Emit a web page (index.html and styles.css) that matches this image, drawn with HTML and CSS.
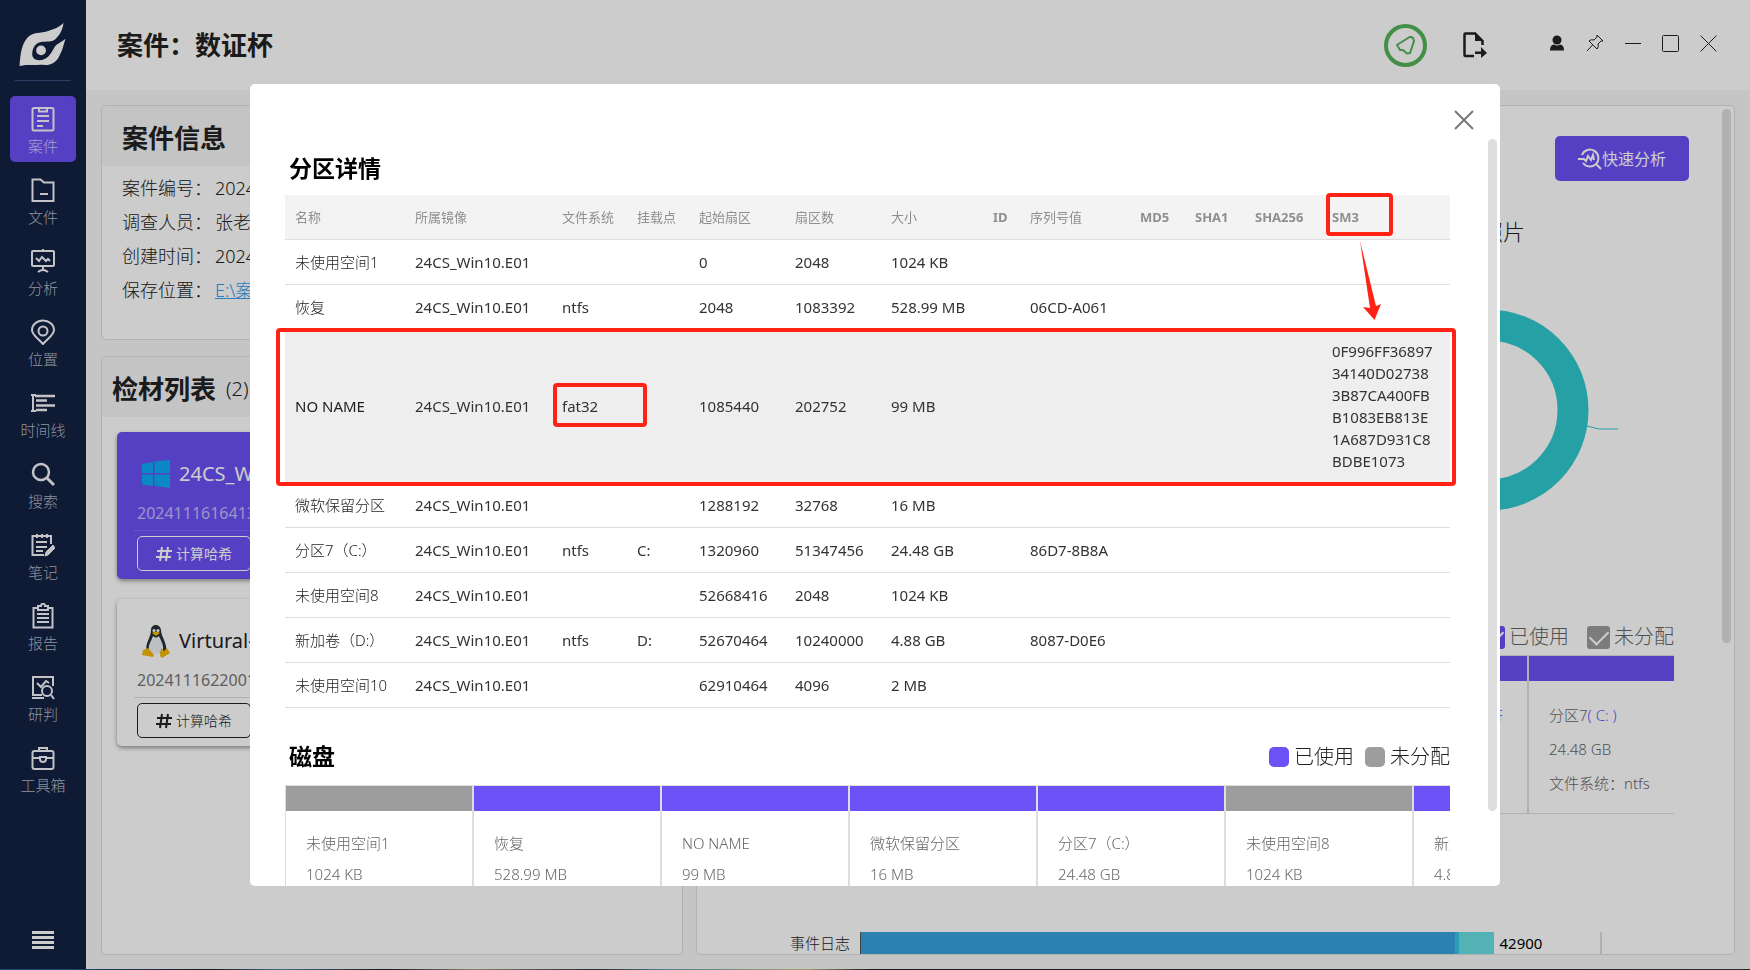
FILE: index.html
```html
<!DOCTYPE html>
<html lang="zh-CN">
<head>
<meta charset="utf-8">
<title>案件：数证杯</title>
<link rel="stylesheet" href="styles.css">
</head>
<body>
<div class="app">
  <nav class="sidebar" aria-label="主导航">
    <svg class="logo" viewBox="0 0 50 46" aria-hidden="true">
      <path fill="#fff" d="M1 44C2 31 3 22 9 15C15 9 22 11 31 8C37 6 42 4 46 0C45 7 42 13 37 17C32 20 26 18 21 20C16 22 14 27 14 32C14 36 17 38 21 38C30 38 33 31 36 26C39 20 44 20 48 16C46 22 45 28 42 33C39 40 34 43 27 43C22 42 19 43 15 43C10 43 5 43 1 44Z"/>
      <circle cx="23" cy="28" r="5" fill="#fff"/>
    </svg>
    <hr class="sidebar-rule">
    <ul class="menu">
      <li><button class="menu-item active"><svg viewBox="0 0 24 26"><rect x="1.5" y="2" width="21" height="22.5" rx="1.5"/><path d="M8 2v3.5h8V2M6 10h12M6 15h12M6 20h6"/></svg>案件</button></li>
      <li><button class="menu-item"><svg viewBox="0 0 24 26"><path d="M1.5 2.5h8l3.500 3h9.500V24H1.500zM9 17h8"/></svg>文件</button></li>
      <li><button class="menu-item"><svg viewBox="0 0 24 26"><rect x="1" y="3" width="22" height="15" rx="1"/><path d="M5 10l3 3 3-4 4 4 2-2 2 2M12 1v2M12 18v4M7 24q5-4 10 0"/></svg>分析</button></li>
      <li><button class="menu-item"><svg viewBox="0 0 24 26"><path d="M12 25C7 19 1 16 1 11a11 9.500 0 0 1 22 0C23 16 17 19 12 25z"/><circle cx="12" cy="12" r="4.500"/></svg>位置</button></li>
      <li><button class="menu-item"><svg viewBox="0 0 24 26"><path d="M2 4v18M0 5h5M0 21h5" /><path stroke-width="2.500" d="M4 6h20M5 10.500h11M5 15.500h19M5 20h11"/></svg>时间线</button></li>
      <li><button class="menu-item"><svg viewBox="0 0 24 26"><path stroke-width="3" d="M16 17l7 7"/><circle cx="10" cy="11" r="8" stroke-width="2.500"/></svg>搜索</button></li>
      <li><button class="menu-item"><svg viewBox="0 0 24 26"><path d="M13 23H1.500V4H20v8M6 2v4M11 2v4M16 2v4M5 10h11M5 15h11M5 19h7"/><path fill="currentColor" stroke-width="1" d="M14 24l1-4 7-7 2 3-7 7z"/></svg>笔记</button></li>
      <li><button class="menu-item"><svg viewBox="0 0 24 26"><path d="M7 5H2.500v19.500h19V5H17M7 3h3c0-3 4-3 4 0h3v4H7zM6 11h12M6 15h12M6 19h12"/></svg>报告</button></li>
      <li><button class="menu-item"><svg viewBox="0 0 24 26"><path d="M22 12V3H2v18h9M1 24h12M6 9l4 4 5-6 3 2"/><circle cx="16" cy="17" r="5"/><path d="M20 21l3 4"/></svg>研判</button></li>
      <li><button class="menu-item"><svg viewBox="0 0 24 26"><rect x="1.500" y="6" width="21" height="18" rx="2"/><path d="M8 6V3h8v3M1.500 13H9M15 13h7.500M9 12v2c0 4 6 4 6 0v-2z"/></svg>工具箱</button></li>
    </ul>
    <button class="menu-toggle" aria-label="展开菜单"><svg viewBox="0 0 22 19"><path d="M0 1.500h22M0 6.500h22M0 11.500h22M0 16.500h22"/></svg></button>
  </nav>

  <div class="workspace">
    <header class="topbar">
      <h1>案件：数证杯</h1>
      <div class="top-actions">
        <button class="status" aria-label="通知"><svg width="19" height="19" viewBox="0 0 19 19"><path d="M1 9L12 2Q15 0 17 2L18 5L14 17L11 17.500L7 14L4 14z"/></svg></button>
        <button class="export" aria-label="导出"><svg width="24" height="26" viewBox="0 0 24 26"><path d="M11 24H2.500Q1.500 24 1.500 23V2.500Q1.500 1.500 2.500 1.500H12L19.500 9v4" fill="none" stroke="currentColor" stroke-width="2.500"/><path fill="currentColor" d="M12 0v9h8.500zM12 19.500h6V15l6 6-6 5v-4h-6z"/></svg></button>
        <div class="window-actions">
          <button aria-label="用户"><svg width="16" height="16" viewBox="0 0 16 16"><circle cx="8" cy="5" r="4.500" fill="currentColor"/><path fill="currentColor" d="M1 15.500Q1 10 5 9.500Q8 11.500 11 9.500Q15 10 15 15.500z"/></svg></button>
          <button aria-label="置顶"><svg width="18" height="18" viewBox="0 0 18 18" class="thin"><path d="M11 1l6 6-2 0-3 3q1 3-1 5L3 7q2-2 5-1l3-3zM6.500 11L1 17"/></svg></button>
          <button aria-label="最小化"><svg width="16" height="16" viewBox="0 0 16 16" class="thin"><path d="M0 8.500h16"/></svg></button>
          <button aria-label="最大化"><svg width="17" height="17" viewBox="0 0 17 17" class="thin"><rect x=".5" y=".5" width="16" height="16" rx="1"/></svg></button>
          <button aria-label="关闭"><svg width="17" height="17" viewBox="0 0 17 17" class="thin"><path d="M.5.5l16 16M16.500.5l-16 16"/></svg></button>
        </div>
      </div>
    </header>

    <main class="content">
      <div class="left">
        <section class="panel case">
          <h2 class="panel-head">案件信息</h2>
          <dl class="facts">
            <dt>案件编号：</dt><dd>20241116</dd>
            <dt>调查人员：</dt><dd>张老师</dd>
            <dt>创建时间：</dt><dd>2024-11-16</dd>
            <dt>保存位置：</dt><dd><a href="#">E:\案件</a></dd>
          </dl>
        </section>
        <section class="panel evidence">
          <div class="panel-head tight"><h2>检材列表</h2><span class="count">(2)</span></div>
          <div class="cards">
            <article class="card selected">
              <div class="card-title"><svg class="os" viewBox="0 0 30 30"><path fill="#0caaf5" d="M1 5l11-2v11H1zM13.500 2.500L29 1v13H13.500zM1 15.500h11V27L1 25.500zM13.500 15.500H29V29l-15.500-2z"/></svg>24CS_Win10.E01</div>
              <p class="serial">20241116164133</p>
              <div class="card-foot"><button class="hash"><svg viewBox="0 0 16 16"><path d="M6 1L4 15M12 1l-2 14M1 5h15M0 11h15"/></svg>计算哈希</button></div>
            </article>
            <article class="card">
              <div class="card-title"><svg class="os" viewBox="0 0 30 34"><path fill="#273038" d="M10 6C10 0 19-1 20 6C20 13 27 19 25 29H6C3 20 10 14 10 6z"/><path fill="#eef1f4" d="M12 12Q15 15 18 12C20 17 23 21 22 26Q15 34 8 27C7 20 10 18 12 12z"/><circle cx="13" cy="6.500" r="1.500" fill="#fff"/><circle cx="17" cy="6.500" r="1.500" fill="#fff"/><path fill="#f5b800" d="M11 9q4-3 8 0l-4 3zM2 26l5-2 6 7-1 2-11-2zM20 24l3 3 3-3 3 5-8 5-2-2z"/></svg>Virtural-Disk</div>
              <p class="serial">20241116220015</p>
              <div class="card-foot"><button class="hash"><svg viewBox="0 0 16 16"><path d="M6 1L4 15M12 1l-2 14M1 5h15M0 11h15"/></svg>计算哈希</button></div>
            </article>
          </div>
        </section>
      </div>

      <section class="panel overview">
        <div class="overview-main">
          <div class="toolbar"><button class="quick"><svg width="24" height="22" viewBox="0 0 24 22"><path d="M4 7a8.500 8.500 0 1 1 1 8M18 16l5 5M0 11h6l2 2 2-5 3 4 2-5 1 5"/></svg>快速分析</button></div>
          <figure class="donut">
            <figcaption>照片</figcaption>
            <svg width="202" height="202" viewBox="0 0 202 202"><circle cx="101" cy="101" r="85" fill="none" stroke="#2fc8cd" stroke-width="31"/><path d="M200 117l12 3h19" fill="none" stroke="#2fc8cd"/></svg>
          </figure>
          <div class="filters">
            <label class="used"><input type="checkbox" checked>已使用</label>
            <label class="free"><input type="checkbox" checked>未分配</label>
          </div>
          <div class="mini-disk">
            <div class="part used"><p class="no-letter">无盘符</p></div>
            <div class="part used"><p>分区7<span>( C: )</span></p><p>24.48 GB</p><p>文件系统：ntfs</p></div>
          </div>
          <div class="chart">
            <span class="chart-label">事件日志</span>
            <div class="plot"><i class="bar-a"></i><i class="bar-b"></i><i class="bar-c"></i><span class="value">42900</span><i class="grid-line"></i></div>
          </div>
        </div>
        <div class="scroll"><i class="thumb short"></i></div>
      </section>
    </main>
  </div>
</div>

<div class="overlay">
  <div class="dialog" role="dialog" aria-modal="true" aria-labelledby="dialog-title">
    <div class="dialog-top"><button class="close" aria-label="关闭"><svg width="20" height="20" viewBox="0 0 20 20"><path d="M1 1l18 18M19 1L1 19"/></svg></button></div>
    <div class="dialog-body">
      <div class="dialog-content">
        <h2 id="dialog-title" class="section-title">分区详情</h2>
        <div class="table-wrap">
          <table>
            <colgroup><col class="w120"><col class="w147"><col class="w75"><col class="w62"><col class="w96"><col class="w96"><col class="w102"><col class="w37"><col class="w110"><col class="w55"><col class="w60"><col class="w77"><col class="w128"></colgroup>
            <thead><tr><th>名称</th><th>所属镜像</th><th>文件系统</th><th>挂载点</th><th>起始扇区</th><th>扇区数</th><th>大小</th><th class="latin">ID</th><th>序列号值</th><th class="latin">MD5</th><th class="latin">SHA1</th><th class="latin">SHA256</th><th class="latin">SM3</th></tr></thead>
            <tbody>
              <tr><td>未使用空间1</td><td>24CS_Win10.E01</td><td></td><td></td><td>0</td><td>2048</td><td>1024 KB</td><td></td><td></td><td></td><td></td><td></td><td></td></tr>
              <tr><td>恢复</td><td>24CS_Win10.E01</td><td>ntfs</td><td></td><td>2048</td><td>1083392</td><td>528.99 MB</td><td></td><td>06CD-A061</td><td></td><td></td><td></td><td></td></tr>
              <tr class="hover"><td>NO NAME</td><td>24CS_Win10.E01</td><td>fat32</td><td></td><td>1085440</td><td>202752</td><td>99 MB</td><td></td><td></td><td></td><td></td><td></td><td>0F996FF36897<br>34140D02738<br>3B87CA400FB<br>B1083EB813E<br>1A687D931C8<br>BDBE1073</td></tr>
              <tr><td>微软保留分区</td><td>24CS_Win10.E01</td><td></td><td></td><td>1288192</td><td>32768</td><td>16 MB</td><td></td><td></td><td></td><td></td><td></td><td></td></tr>
              <tr><td>分区7（C:）</td><td>24CS_Win10.E01</td><td>ntfs</td><td>C:</td><td>1320960</td><td>51347456</td><td>24.48 GB</td><td></td><td>86D7-8B8A</td><td></td><td></td><td></td><td></td></tr>
              <tr><td>未使用空间8</td><td>24CS_Win10.E01</td><td></td><td></td><td>52668416</td><td>2048</td><td>1024 KB</td><td></td><td></td><td></td><td></td><td></td><td></td></tr>
              <tr><td>新加卷（D:）</td><td>24CS_Win10.E01</td><td>ntfs</td><td>D:</td><td>52670464</td><td>10240000</td><td>4.88 GB</td><td></td><td>8087-D0E6</td><td></td><td></td><td></td><td></td></tr>
              <tr><td>未使用空间10</td><td>24CS_Win10.E01</td><td></td><td></td><td>62910464</td><td>4096</td><td>2 MB</td><td></td><td></td><td></td><td></td><td></td><td></td></tr>
            </tbody>
          </table>
          <i class="mark mark-head"></i>
          <i class="mark mark-row"></i>
          <i class="mark mark-fs"></i>
          <svg class="arrow" width="22" height="80" viewBox="0 0 22 80"><path fill="#ff2315" d="M1 0L17 65L22 63L15.500 79L4 66L11 67z"/></svg>
        </div>
        <div class="disk-head">
          <h2 class="section-title">磁盘</h2>
          <div class="legend"><i class="swatch used"></i>已使用<i class="swatch free"></i>未分配</div>
        </div>
        <div class="disk">
          <div class="part free"><p>未使用空间1</p><p>1024 KB</p></div>
          <div class="part used"><p>恢复</p><p>528.99 MB</p></div>
          <div class="part used"><p>NO NAME</p><p>99 MB</p></div>
          <div class="part used"><p>微软保留分区</p><p>16 MB</p></div>
          <div class="part used"><p>分区7（C:）</p><p>24.48 GB</p></div>
          <div class="part free"><p>未使用空间8</p><p>1024 KB</p></div>
          <div class="part used"><p>新加卷（D:）</p><p>4.88 GB</p></div>
        </div>
      </div>
      <div class="scroll"><i class="thumb"></i></div>
    </div>
  </div>
</div>
<div class="desktop-edge"></div>
</body>
</html>
```

FILE: styles.css
```css
* { box-sizing: border-box; }
body {
  margin: 0;
  height: 100vh;
  overflow: hidden;
  display: flex;
  flex-direction: column;
  font: 300 15px/22px "Noto Sans", "Noto Sans CJK SC", sans-serif;
  color: #222;
  background: #f7f7f7;
}
h1, h2, p, dl, dd, ul, figure { margin: 0; padding: 0; }
ul { list-style: none; }
button { font: inherit; color: inherit; background: none; border: 0; padding: 0; cursor: pointer; }
svg { display: block; flex: none; }

.app { flex: 1; min-height: 0; display: flex; }
.desktop-edge {
  position: relative;
  z-index: 20;
  height: 1px;
  background: linear-gradient(90deg, #1d4672 0 4%, #15181c 12%, #3f6f80 16%, #15181c 22%, #857d70 27%, #232c2e 34%, #4f8088 38%, #a0a070 46%, #15181c 50%, #26282c 100%);
}

/* Sidebar */
.sidebar {
  width: 86px;
  flex: none;
  display: flex;
  flex-direction: column;
  align-items: center;
  padding: 23px 0 19px;
  background: #132142;
  color: #fff;
}
.logo { width: 50px; height: 45px; }
.sidebar-rule { width: 56px; margin: 12px 0 15px; border: 0; border-top: 1px solid #3b4d7e; }
.menu { display: grid; gap: 5px; }
.menu-item {
  width: 66px;
  height: 66px;
  padding-top: 10px;
  display: flex;
  flex-direction: column;
  align-items: center;
  gap: 3px;
  border-radius: 5px;
  color: #b4b9c6;
}
.menu-item.active { background: #6b51f6; color: #d0c8fc; }
.menu-item svg { width: 24px; height: 26px; fill: none; stroke: currentColor; stroke-width: 2; color: #f4f4fa; }
.menu-toggle svg { width: 22px; height: 19px; stroke: #fff; stroke-width: 3; }
.menu-toggle { margin-top: auto; }

/* Header */
.workspace { flex: 1; min-width: 0; display: flex; flex-direction: column; }
.topbar {
  height: 90px;
  flex: none;
  display: flex;
  align-items: center;
  justify-content: space-between;
  padding: 0 33px 0 31px;
  background: #fff;
}
h1, .panel h2 { font-size: 26px; line-height: 36px; font-weight: 700; }
.top-actions { display: flex; align-items: center; gap: 36px; }
.window-actions { display: flex; align-items: center; gap: 21px; padding: 0 0 4px 26px; }
.top-actions .status {
  width: 43px;
  height: 43px;
  display: grid;
  place-items: center;
  border: 4px solid #56b35a;
  border-radius: 50%;
}
.status svg { fill: none; stroke: #56b35a; stroke-width: 2; }
.thin { fill: none; stroke: currentColor; stroke-width: 1; }

/* Panels behind the dialog */
.content {
  flex: 1;
  min-height: 0;
  display: grid;
  grid-template-columns: 582fr 1039fr;
  gap: 13px;
  padding: 15px 15px 14px;
}
.left { display: flex; flex-direction: column; gap: 16px; min-height: 0; }
.panel { border: 1px solid #dedede; border-radius: 5px; background: #fff; overflow: hidden; }
.panel-head { height: 60px; padding: 14px 20px; background: #f5f5f5; }
.panel-head.tight { display: flex; gap: 10px; padding: 14px 10px; }
.count { font-size: 20px; line-height: 36px; }
.evidence { flex: 1; }
.facts {
  display: grid;
  grid-template-columns: 93px 1fr;
  padding: 5px 20px 32px;
  font-size: 18px;
  line-height: 34px;
}
.facts dt { white-space: nowrap; }
.facts a { color: #369cec; }
.cards { display: grid; gap: 20px; padding: 15px; }
.card { padding: 23px 20px 8px; border-radius: 5px; box-shadow: 0 2px 4px rgba(0, 0, 0, .4); }
.card-title { display: flex; align-items: center; gap: 8px; font-size: 20px; line-height: 38px; font-weight: 400; }
.os { width: 30px; height: 34px; margin-left: 4px; }
.serial { font-size: 16px; line-height: 22px; margin: 9px 0 6px; color: #777; font-weight: 400; }
.card-foot { margin: 0 -3px; padding: 5px 3px 0; border-top: 1px solid #dcdcdc; }
.card.selected { background: #6b51f6; color: #fff; }
.selected .serial { color: #c3b9fb; }
.selected .card-foot { border-color: #8069f7; }
.hash {
  width: 114px;
  height: 35px;
  display: flex;
  align-items: center;
  justify-content: center;
  gap: 4px;
  border: 1px solid currentColor;
  border-radius: 5px;
  font-size: 14px;
}
.selected .hash { font-weight: 400; }
.hash svg { width: 16px; height: 16px; fill: none; stroke: currentColor; stroke-width: 2; }

.overview { display: flex; }
.overview-main { flex: 1; min-width: 0; display: flex; flex-direction: column; align-items: flex-end; padding-top: 30px; }
.overview-main > * { flex: none; }
.toolbar { padding-right: 33px; }
.quick {
  width: 134px;
  height: 45px;
  display: flex;
  align-items: center;
  justify-content: center;
  border-radius: 5px;
  background: #6b51f6;
  color: #fff;
  font-size: 16px;
  font-weight: 400;
}
.quick svg { fill: none; stroke: currentColor; stroke-width: 2; }
.donut { width: 202px; margin: 34px 133px 0 0; }
.donut figcaption { padding-right: 64px; text-align: right; font-size: 22px; line-height: 32px; }
.donut svg { margin-top: 62px; overflow: visible; }
.filters { display: flex; gap: 18px; margin: 111px 48px 3px 0; font-size: 20px; line-height: 30px; color: #666; }
.filters label { display: flex; align-items: center; gap: 4px; }
.filters input {
  appearance: none;
  width: 23px;
  height: 23px;
  margin: 0;
  display: grid;
  place-items: center;
  border-radius: 3px;
  background: #9c9c9c;
}
.filters .used input { background: #6b51f6; }
.filters input::before {
  content: "";
  width: 16px;
  height: 9px;
  margin-top: -4px;
  border: solid #fff;
  border-width: 0 0 2px 2px;
  transform: rotate(-45deg);
}
.mini-disk {
  width: 334px;
  height: 159px;
  margin-right: 48px;
  display: flex;
  overflow: hidden;
  border: solid #dedede;
  border-width: 1px 0;
  color: #666;
}
.mini-disk .part { border-width: 0 1px; line-height: 34px; }
.mini-disk .part:last-child { flex: 0 0 146px; border-right: 0; }
.mini-disk span, .no-letter { color: #6b51f6; }
.mini-disk .no-letter { text-align: right; padding-right: 24px; }
.chart { align-self: stretch; display: flex; margin-top: 118px; padding-left: 93px; }
.chart-label { width: 70px; line-height: 22px; }
.plot { flex: 1; display: flex; height: 30px; border-left: 1px solid #555; }
.plot i { flex: none; }
.bar-a { width: 69%; background: #36a3dc; }
.bar-b { width: 4px; background: #37c4e8; }
.bar-c { width: 4%; background: #67dfe4; }
.value { width: 106px; padding-left: 6px; font-weight: 400; color: #000; }
.grid-line { width: 2px; background: #dcdcdc; }

.scroll { width: 12px; flex: none; }
.thumb { display: block; width: 9px; height: 90%; border-radius: 5px; background: #dedede; }
.thumb.short { height: 63%; margin-top: 3px; }

/* Dialog */
.overlay { position: fixed; inset: 0; z-index: 10; padding: 84px 250px; background: rgba(0, 0, 0, .2); }
.dialog { height: 100%; display: flex; flex-direction: column; overflow: hidden; border-radius: 5px; background: #fff; }
.dialog-top { height: 55px; flex: none; display: flex; justify-content: flex-end; align-items: flex-start; padding: 26px 26px 0; }
.close svg { stroke: #777; stroke-width: 2; }
.dialog-body { flex: 1; min-height: 0; display: flex; gap: 38px; padding-left: 35px; }
.dialog-content { flex: 1; min-width: 0; padding-top: 13px; }
.section-title { padding-left: 4px; font-size: 23px; line-height: 32px; font-weight: 700; color: #000; }
.table-wrap { position: relative; margin-top: 11px; }
table { width: 100%; table-layout: fixed; border-collapse: separate; border-spacing: 0; }
th, td { height: 45px; padding: 10px 0 10px 10px; border-bottom: 1px solid #dedede; text-align: left; white-space: nowrap; }
th { background: #f3f3f3; color: #8f8f8f; font-size: 13px; font-weight: 400; }
.latin { font-weight: 700; }
td { font-weight: 400; color: #333; }
td:first-child { font-weight: 300; color: #222; }
.hover td { background: #eee; }
.hover td:first-child { font-weight: 400; }
.w120 { width: 120px; }
.w147 { width: 147px; }
.w75 { width: 75px; }
.w62 { width: 62px; }
.w96 { width: 96px; }
.w102 { width: 102px; }
.w37 { width: 37px; }
.w110 { width: 110px; }
.w55 { width: 55px; }
.w60 { width: 60px; }
.w77 { width: 77px; }
.w128 { width: 128px; }

/* Red annotations laid over the table */
.mark { position: absolute; border: 4px solid #ff2315; border-radius: 4px; }
.mark-head { top: -2px; right: 57px; width: 67px; height: 43px; }
.mark-row { top: 133px; left: -9px; right: -6px; height: 158px; }
.mark-fs { top: 188px; left: 23%; width: 94px; height: 44px; }
.arrow { position: absolute; top: 46px; right: 69px; }

.disk-head { display: flex; justify-content: space-between; margin: 32px 0 13px; }
.legend { display: flex; align-items: center; font-size: 20px; line-height: 34px; }
.swatch { width: 20px; height: 20px; margin: 0 5px 0 11px; border-radius: 5px; }
.swatch.used { background: #6b51f6; }
.swatch.free { background: #9d9d9d; }
.disk { display: flex; margin-top: -2px; overflow: hidden; color: #666; }
.part { flex: 0 0 188px; border: 1px solid #dedede; line-height: 31px; white-space: nowrap; }
.part::before { content: ""; display: block; height: 25px; margin-bottom: 17px; background: #9d9d9d; }
.part.used::before { background: #6b51f6; }
.part p { padding-left: 20px; }
```
